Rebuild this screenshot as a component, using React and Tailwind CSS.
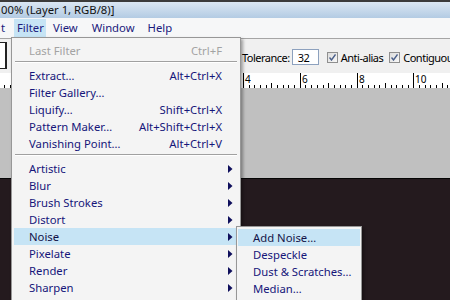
import React from 'react';

const filterItems = [
    { label: 'Extract…', key: 'Alt+Ctrl+X' },
    { label: 'Filter Gallery…', key: '' },
    { label: 'Liquify…', key: 'Shift+Ctrl+X' },
    { label: 'Pattern Maker…', key: 'Alt+Shift+Ctrl+X' },
    { label: 'Vanishing Point…', key: 'Alt+Ctrl+V' },
];

const subGroups = ['Artistic', 'Blur', 'Brush Strokes', 'Distort', 'Noise', 'Pixelate', 'Render', 'Sharpen'];

const noiseItems = ['Add Noise…', 'Despeckle', 'Dust & Scratches…', 'Median…'];

const Arrow = () => (
    <svg width="5" height="8" viewBox="0 0 5 8" className="shrink-0">
        <path d="M0 0 L4.5 4 L0 8 Z" fill="#0f0f5c" />
    </svg>
);

const Check = () => (
    <span className="w-[11px] h-[11px] border border-[#8f8f8f] bg-gradient-to-br from-[#dcdcdc] to-[#f8f8f8] flex items-center justify-center">
        <svg width="7" height="7" viewBox="0 0 7 7">
            <path d="M0.5 3.5 L2.5 6 L6.5 0.5" stroke="#4a5f8a" strokeWidth="1.4" fill="none" />
        </svg>
    </span>
);

const Ruler = () => {
    // major tick every ~56.8px, 10 subdivisions
    const step = 56.8;
    const majors = [];
    for (let k = -5; k <= 3; k++) majors.push(243 + k * step);
    const labels = { 0: '4', 1: '6', 2: '8', 3: '10' };
    return (
        <svg width="450" height="15" className="block">
            <rect width="450" height="15" fill="#ffffff" />
            {majors.map((x, i) => (
                <g key={i}>
                    <line x1={Math.round(x) + 0.5} y1="0" x2={Math.round(x) + 0.5} y2="15" stroke="#000" />
                    {[1, 2, 3, 4, 5, 6, 7, 8, 9].map((j) => {
                        const tx = Math.round(x + (j * step) / 10) + 0.5;
                        return <line key={j} x1={tx} y1={j === 5 ? 10 : 12} x2={tx} y2="15" stroke="#000" />;
                    })}
                    {labels[i - 5] && (
                        <text x={Math.round(x) + 2} y="10" fontSize="10" fontFamily="'Noto Sans', sans-serif" fill="#000">
                            {labels[i - 5]}
                        </text>
                    )}
                </g>
            ))}
        </svg>
    );
};

export default function App() {
    return (
        <div className="relative w-[450px] h-[300px] overflow-hidden bg-[#c0c0c0] font-['Noto_Sans',sans-serif] text-[11.3px] leading-none flex flex-col">
            {/* title bar */}
            <div className="h-[18px] shrink-0 border-t-2 border-[#3b3b3b] bg-gradient-to-b from-[#dbe7f3] to-[#b3cbe3] flex items-center pl-[1px] text-[#111]">
                00% (Layer 1, RGB/8)]
            </div>

            {/* menu bar */}
            <div className="h-[20px] shrink-0 bg-[#f6f7f8] flex items-center text-[#1a1a7c]">
                <span className="pl-[1px] w-[14px]">t</span>
                <span className="h-[19px] w-[32px] bg-[#c6e4f5] flex items-center pl-[3px]">Filter</span>
                <span className="ml-[7px]">View</span>
                <span className="ml-[14px]">Window</span>
                <span className="ml-[13px]">Help</span>
            </div>

            {/* options bar */}
            <div className="h-[35px] shrink-0 border-t border-[#a5a5a5] bg-[#f0f0f0] flex items-center whitespace-nowrap text-[11px] tracking-[-0.5px] text-black">
                <div className="w-[12px] h-[28px] flex items-start shrink-0">
                    <div className="w-[7px] h-[27px] bg-white border-r-2 border-t border-b border-[#222]" />
                </div>
                <div className="ml-[230px] flex items-center pt-[2px] shrink-0">
                    <span className="shrink-0">Tolerance:</span>
                    <span className="ml-[2px] w-[27px] h-[16px] border border-[#8da1be] bg-white flex items-center pl-[5px] shrink-0">32</span>
                    <span className="ml-[8px] shrink-0"><Check /></span>
                    <span className="ml-[3px] shrink-0">Anti-alias</span>
                    <span className="ml-[6px] shrink-0"><Check /></span>
                    <span className="ml-[3px] shrink-0">Contiguous</span>
                </div>
            </div>

            {/* ruler */}
            <div className="h-[15px] shrink-0">
                <Ruler />
            </div>

            {/* canvas */}
            <div className="flex-1 pt-[90px]">
                <div className="h-full bg-[#241a1e] border-t border-[#050505]" />
            </div>

            {/* Filter menu */}
            <div className="absolute left-[11px] top-[37px] w-[230px] h-[280px] bg-[#f4f4f4] border border-[#979797] shadow-[2px_2px_3px_rgba(0,0,0,0.35)] pt-[4px] text-[#16167a]">
                <div className="h-[17px] mx-[2px] pl-[15px] pr-[16px] flex items-center justify-between text-[#a3a3a3]">
                    <span>Last Filter</span>
                    <span>Ctrl+F</span>
                </div>
                <div className="h-[8px] pt-[2px] px-[3px]">
                    <div className="border-t border-[#a0a0a0] border-b border-b-white" />
                </div>
                {filterItems.map((it) => (
                    <div key={it.label} className="h-[17px] mx-[2px] pl-[15px] pr-[16px] flex items-center justify-between">
                        <span>{it.label}</span>
                        <span>{it.key}</span>
                    </div>
                ))}
                <div className="h-[8px] pt-[2px] px-[3px]">
                    <div className="border-t border-[#a0a0a0] border-b border-b-white" />
                </div>
                {subGroups.map((g) => (
                    <div
                        key={g}
                        className={
                            g === 'Noise'
                                ? 'h-[17px] mx-[2px] pl-[15px] pr-[5px] flex items-center justify-between bg-[#c6e4f5] text-[#111148]'
                                : 'h-[17px] mx-[2px] pl-[15px] pr-[5px] flex items-center justify-between'
                        }
                    >
                        <span>{g}</span>
                        <Arrow />
                    </div>
                ))}
            </div>

            {/* Noise submenu */}
            <div className="absolute left-[236px] top-[226px] w-[126px] h-[90px] bg-[#f4f4f4] border border-[#979797] shadow-[2px_2px_3px_rgba(0,0,0,0.35)] pt-[2px] text-[#16167a]">
                {noiseItems.map((n, i) => (
                    <div
                        key={n}
                        className={
                            i === 0
                                ? 'h-[17px] mx-[1px] pl-[15px] flex items-center bg-[#c6e4f5] text-[#141448]'
                                : 'h-[17px] mx-[1px] pl-[15px] flex items-center'
                        }
                    >
                        {n}
                    </div>
                ))}
            </div>
        </div>
    );
}
